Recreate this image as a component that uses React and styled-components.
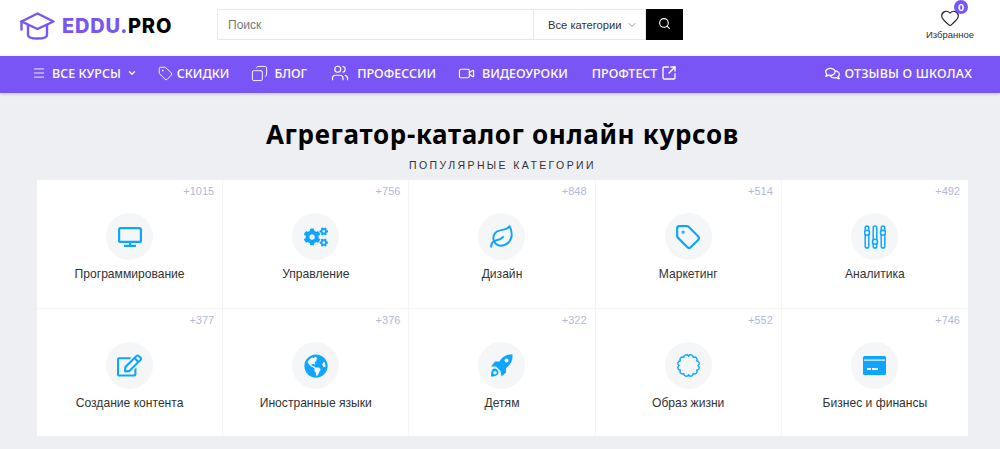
import React from 'react';
import styled, { createGlobalStyle } from 'styled-components';
import {
  ChevronDown,
  Copy,
  Heart,
  Leaf,
  Menu,
  Search,
  SquareArrowOutUpRight,
  Tag,
  Users,
  Video,
} from 'lucide-react';
import { FaCogs, FaGlobeAmericas, FaRegComments, FaRegEdit } from 'react-icons/fa';

const GlobalStyle = createGlobalStyle`
  html, body {
    margin: 0;
    padding: 0;
    background: #eeeff2;
    font-family: "Liberation Sans", Arial, sans-serif;
  }
  * {
    box-sizing: border-box;
  }
`;

const Page = styled.div`
  width: 1000px;
  height: 449px;
  overflow: hidden;
`;

const Header = styled.header`
  height: 56px;
  background: #fff;
  display: flex;
  align-items: flex-start;
  padding: 9px 0 0 20px;
`;

const LogoLink = styled.a`
  width: 197px;
  height: 31px;
  display: flex;
  align-items: center;
  gap: 7px;
  margin-top: 1px;
`;

const LogoText = styled.span`
  font-family: Inter, sans-serif;
  font-weight: 800;
  font-size: 20px;
  letter-spacing: 0.8px;
  color: #000;
`;

const LogoAccent = styled.span`
  color: #7a55f5;
`;

const SearchForm = styled.form`
  width: 466px;
  height: 31px;
  display: flex;
`;

const SearchField = styled.div`
  flex: 1;
  display: flex;
  align-items: center;
  padding-left: 10px;
  border: 1px solid #e8e8e8;
  border-right: 0;
  font-size: 12px;
  color: #777;
`;

const CategorySelect = styled.div`
  width: 113px;
  display: flex;
  align-items: center;
  justify-content: space-between;
  padding: 0 7px 0 14px;
  border: 1px solid #e8e8e8;
  font-size: 11.2px;
  white-space: nowrap;
  color: #333;

  svg {
    color: #999;
  }
`;

const SearchButton = styled.button`
  width: 37px;
  border: 0;
  padding: 0 0 3px;
  background: #000;
  color: #fff;
  display: flex;
  align-items: center;
  justify-content: center;
`;

const Favorites = styled.a`
  position: relative;
  margin-left: 243px;
  margin-top: -1px;
  display: flex;
  flex-direction: column;
  align-items: center;
  font-size: 9.5px;
  color: #333;
  width: 48px;

  svg {
    margin-bottom: 1px;
  }
`;

const Counter = styled.span`
  position: absolute;
  top: -8px;
  left: 28px;
  width: 14px;
  height: 14px;
  border-radius: 50%;
  background: #7a55f5;
  color: #fff;
  font-family: Inter, sans-serif;
  font-weight: 700;
  font-size: 9px;
  display: flex;
  align-items: center;
  justify-content: center;
`;

const Nav = styled.nav`
  height: 37px;
  background: #7a55f5;
  box-shadow: 0 1px 3px rgba(0, 0, 0, 0.2);
  display: flex;
  align-items: center;
  padding: 0 28px 3px 32px;
  color: #fff;
`;

const NavItem = styled.a`
  display: flex;
  align-items: center;
  gap: ${(p) => p.$gap || 4}px;
  margin-right: ${(p) => p.$after || 0}px;
  margin-left: ${(p) => (p.$pushRight ? 'auto' : 0)};
  font-family: "Noto Sans", sans-serif;
  font-weight: 500;
  font-size: 12.5px;
  letter-spacing: ${(p) => p.$spacing || 0}px;
  white-space: nowrap;
`;

const BlogIcon = styled(Copy)`
  transform: scaleX(-1);
`;

const Content = styled.main`
  padding: 0 32px 0 37px;
`;

const Title = styled.h1`
  margin: 23px 0 0;
  height: 36px;
  line-height: 36px;
  text-align: center;
  font-family: "Noto Sans", sans-serif;
  font-weight: 700;
  font-size: 26px;
  letter-spacing: 0.65px;
  color: #000;
`;

const Subtitle = styled.div`
  margin-top: 4px;
  height: 18px;
  line-height: 18px;
  text-align: center;
  font-size: 10.5px;
  letter-spacing: 2.4px;
  color: #333;
`;

const Grid = styled.div`
  margin-top: 6px;
  display: grid;
  grid-template-columns: repeat(5, 1fr);
  grid-auto-rows: 128px;
  background: #fff;
`;

const Cell = styled.a`
  position: relative;
  display: flex;
  flex-direction: column;
  align-items: center;
  padding-top: 33px;
  border-right: 1px solid #f5f5f7;
  font-size: 12.1px;
  color: #333;

  &:nth-child(5n) {
    border-right: 0;
  }
  &:nth-child(n + 6) {
    border-top: 1px solid #f5f5f7;
  }
`;

const Count = styled.span`
  position: absolute;
  top: 5px;
  right: 8px;
  font-size: 11px;
  color: #b4b8d8;
`;

const IconCircle = styled.span`
  width: 47px;
  height: 47px;
  border-radius: 50%;
  background: #f5f6f8;
  color: #0ea5ff;
  display: flex;
  align-items: center;
  justify-content: center;
  margin-bottom: 7px;
`;

const LogoMark = () => (
  <svg width="35" height="28" viewBox="0 0 35 28" fill="none" stroke="#7a55f5" strokeWidth="2.4" strokeLinejoin="round" strokeLinecap="round">
    <path d="M1.500 9.500 17.500 1.500l16 8-16 7.500z" />
    <path d="M1.500 9.500v8" />
    <path d="M8 13v10c0 2 2 3.500 9.500 3.500S27 25 27 23V13" />
  </svg>
);

const MonitorIcon = () => (
  <svg width="24" height="20" viewBox="0 0 24 20" fill="none" stroke="currentColor" strokeWidth="2.200">
    <rect x="1.100" y="1.100" width="21.800" height="13.800" rx="1.500" />
    <path d="M12 15v3M6 18.900h12" />
  </svg>
);

const SlidersIcon = () => (
  <svg width="22" height="24" viewBox="0 0 22 24" fill="none" stroke="currentColor" strokeWidth="1.500">
    <rect x="1.200" y="1" width="3.600" height="22" rx="1.800" />
    <rect x="9.200" y="1" width="3.600" height="22" rx="1.800" />
    <rect x="17.200" y="1" width="3.600" height="22" rx="1.800" />
    <circle cx="3" cy="7.700" r="2.500" fill="#f5f6f8" />
    <circle cx="11" cy="16.700" r="2.500" fill="#f5f6f8" />
    <circle cx="19" cy="7.700" r="2.500" fill="#f5f6f8" />
  </svg>
);

const CardIcon = () => (
  <svg width="23" height="19" viewBox="0 0 23 19">
    <rect width="23" height="19" rx="1.500" fill="currentColor" />
    <rect x="1" y="3.500" width="21" height="1.200" fill="#f5f6f8" />
    <rect x="4" y="12" width="4" height="2" fill="#f5f6f8" />
    <rect x="9" y="12" width="6" height="2" fill="#f5f6f8" />
  </svg>
);

const RocketIcon = () => (
  <svg width="23" height="23" viewBox="0 0 23 23" fill="currentColor">
    <path fillRule="evenodd" d="M22.500.500c.4 5.500-1.500 10-6.500 13.500v4.500L11.500 22.500l-1-5.500-4.500-4.500H1l4-5h4.500C13 2 17 .200 22.500.500zM16.500 4.500a2 2 0 1 0 0 4 2 2 0 0 0 0-4z" />
    <path fillRule="evenodd" d="M4 14.500a4 4 0 0 1 4.500 4.500C8 21 6 22.500 1 22.500 1 18 2 15 4 14.500zM5 17a1.800 1.800 0 1 0 0 3.600A1.800 1.800 0 0 0 5 17z" />
  </svg>
);

const scallops = Array.from({ length: 12 }, (_, i) => {
  const a = (((i + 1) * 360) / 12 - 90) * (Math.PI / 180);
  return `A2.600 2.600 0 0 1 ${(11.5 + 9.5 * Math.cos(a)).toFixed(2)} ${(11.5 + 9.5 * Math.sin(a)).toFixed(2)}`;
}).join(' ');

const ScallopIcon = () => (
  <svg width="23" height="23" viewBox="0 0 23 23" fill="none" stroke="currentColor" strokeWidth="1.400">
    <path d={`M11.500 2 ${scallops}Z`} />
  </svg>
);

const categories = [
  { name: 'Программирование', count: '+1015', icon: <MonitorIcon /> },
  { name: 'Управление', count: '+756', icon: <FaCogs size={24} /> },
  { name: 'Дизайн', count: '+848', icon: <Leaf size={26} strokeWidth={1.8} /> },
  { name: 'Маркетинг', count: '+514', icon: <Tag size={26} strokeWidth={2} /> },
  { name: 'Аналитика', count: '+492', icon: <SlidersIcon /> },
  { name: 'Создание контента', count: '+377', icon: <FaRegEdit size={25} /> },
  { name: 'Иностранные языки', count: '+376', icon: <FaGlobeAmericas size={24} /> },
  { name: 'Детям', count: '+322', icon: <RocketIcon /> },
  { name: 'Образ жизни', count: '+552', icon: <ScallopIcon /> },
  { name: 'Бизнес и финансы', count: '+746', icon: <CardIcon /> },
];

const App = () => (
  <Page>
    <GlobalStyle />
    <Header>
      <LogoLink>
        <LogoMark />
        <LogoText>
          <LogoAccent>EDDU.</LogoAccent>PRO
        </LogoText>
      </LogoLink>
      <SearchForm>
        <SearchField>Поиск</SearchField>
        <CategorySelect>
          Все категории
          <ChevronDown size={12} />
        </CategorySelect>
        <SearchButton type="button">
          <Search size={13} />
        </SearchButton>
      </SearchForm>
      <Favorites>
        <Heart size={20} strokeWidth={1.4} color="#222" />
        Избранное
        <Counter>0</Counter>
      </Favorites>
    </Header>
    <Nav>
      <NavItem $gap={6} $after={21}>
        <Menu size={14} strokeWidth={1.5} />
        ВСЕ КУРСЫ
        <ChevronDown size={10} strokeWidth={3} />
      </NavItem>
      <NavItem $after={22}>
        <Tag size={15} strokeWidth={1.5} />
        СКИДКИ
      </NavItem>
      <NavItem $gap={6} $after={24}>
        <BlogIcon size={17} strokeWidth={1.3} />
        БЛОГ
      </NavItem>
      <NavItem $gap={8} $after={22}>
        <Users size={18} strokeWidth={1.6} />
        ПРОФЕССИИ
      </NavItem>
      <NavItem $gap={7} $after={24}>
        <Video size={17} strokeWidth={1.6} />
        ВИДЕОУРОКИ
      </NavItem>
      <NavItem>
        ПРОФТЕСТ
        <SquareArrowOutUpRight size={16} strokeWidth={2} />
      </NavItem>
      <NavItem $pushRight $spacing={0.2}>
        <FaRegComments size={15} />
        ОТЗЫВЫ О ШКОЛАХ
      </NavItem>
    </Nav>
    <Content>
      <Title>Агрегатор-каталог онлайн курсов</Title>
      <Subtitle>ПОПУЛЯРНЫЕ КАТЕГОРИИ</Subtitle>
      <Grid>
        {categories.map((c) => (
          <Cell key={c.name}>
            <Count>{c.count}</Count>
            <IconCircle>{c.icon}</IconCircle>
            {c.name}
          </Cell>
        ))}
      </Grid>
    </Content>
  </Page>
);

export default App;
